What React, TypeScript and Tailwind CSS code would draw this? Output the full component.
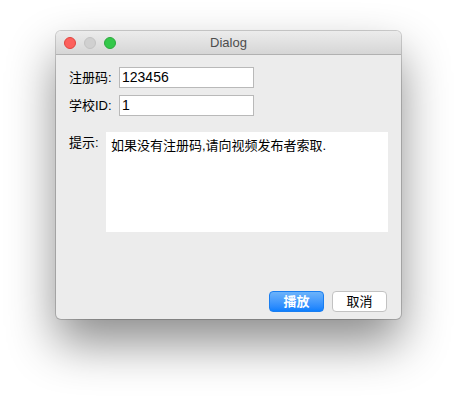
import React from "react";

const font = { fontFamily: '"Liberation Sans", "Noto Sans CJK SC", sans-serif' };

const Field = ({ label, value }: { label: string; value: string }) => (
  <div className="flex items-center">
    <span className="w-[50px] text-[13px] text-black">{label}</span>
    <div className="w-[135px] h-[21px] border border-[#b9b9b9] bg-white flex items-center px-[2px] text-[14px] text-black">
      {value}
    </div>
  </div>
);

const App = () => {
  return (
    <div className="w-[457px] h-[399px] bg-white pt-[31px] pl-[56px]" style={font}>
      <div className="w-[345px] h-[288px] rounded-[5px] bg-[#ececec] flex flex-col overflow-hidden shadow-[0_24px_48px_rgba(0,0,0,0.45),0_0_0_1px_rgba(0,0,0,0.18)]">
        {/* title bar */}
        <div className="relative h-[24px] flex items-center justify-center bg-gradient-to-b from-[#ececec] to-[#d6d6d6] border-b border-[#b1b1b1]">
          <div className="absolute left-[8px] top-[6px] flex gap-[8px]">
            <span className="w-[12px] h-[12px] rounded-full bg-[#fc605c] border border-[#e0443e]" />
            <span className="w-[12px] h-[12px] rounded-full bg-[#d0d0d0] border border-[#c3c3c3]" />
            <span className="w-[12px] h-[12px] rounded-full bg-[#34c84a] border border-[#2ca93d]" />
          </div>
          <span className="text-[13px] text-[#4d4d4d]">Dialog</span>
        </div>

        <div className="flex-1 flex flex-col pl-[13px] pr-[13px] pt-[12px] pb-[7px]">
          <div className="flex flex-col gap-[7px]">
            <Field label="注册码:" value="123456" />
            <Field label="学校ID:" value="1" />
          </div>

          <div className="flex mt-[16px]">
            <span className="w-[37px] pt-[1px] text-[13px] text-black">提示:</span>
            <div className="flex-1 h-[100px] bg-white px-[5px] pt-[6px] text-[13px] leading-[16px] text-black">
              如果没有注册码,请向视频发布者索取.
            </div>
          </div>

          <div className="flex-1" />

          <div className="flex justify-end gap-[8px] pr-[1px]">
            <button className="w-[55px] h-[21px] rounded-[4px] bg-gradient-to-b from-[#6cb3fa] to-[#0b7ffe] border border-[#1a7ef0] text-white text-[13px] font-semibold flex items-center justify-center">
              播放
            </button>
            <button className="w-[55px] h-[21px] rounded-[4px] bg-white border border-[#c2c2c2] text-black text-[13px] flex items-center justify-center">
              取消
            </button>
          </div>
        </div>
      </div>
    </div>
  );
};

export default App;
